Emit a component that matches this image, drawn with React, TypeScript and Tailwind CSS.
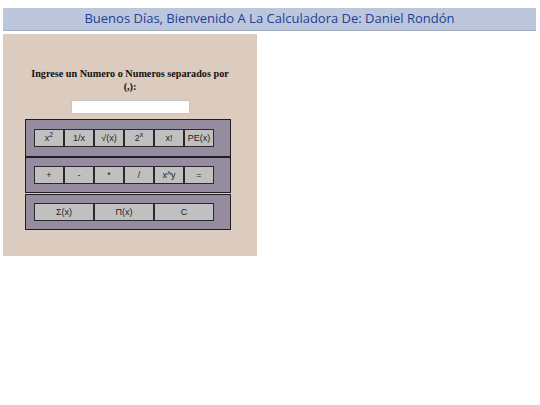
import React, { useState } from 'react';

const btn =
  "h-[18px] bg-[#c0c0c0] border border-[#2a2a2a] text-[9px] text-[#222] flex items-center justify-center leading-none";

const Box = ({ children, h }: { children: React.ReactNode; h: string }) => (
  <div className={`w-[206px] bg-[#958ca0] border border-[#1e1e1e] px-2 flex items-center ${h}`}>
    {children}
  </div>
);

const App = () => {
  const [valor, setValor] = useState('');

  return (
    <div className="min-h-[405px] bg-white pt-2 px-[3px]" style={{ fontFamily: '"Liberation Sans", Arial, sans-serif' }}>
      <h1
        className="h-[23px] bg-[#bcc6dc] border-b border-[#a4adbf] w-[533px] flex items-center justify-center text-[13px] font-medium text-[#1d3f94]"
        style={{ fontFamily: '"Open Sans", sans-serif' }}
      >
        Buenos Días, Bienvenido A La Calculadora De: Daniel Rondón
      </h1>

      <div className="mt-[3px] w-[254px] h-[222px] bg-[#dccbbf] pt-[33px] px-[22px]">
        <p
          className="text-center font-bold text-[10.2px] leading-[13px] text-[#111]"
          style={{ fontFamily: '"Liberation Serif", "Times New Roman", serif' }}
        >
          Ingrese un Numero o Numeros separados por (,):
        </p>
        <div className="flex justify-center mt-[7px]">
          <input
            value={valor}
            onChange={(e) => setValor(e.target.value)}
            className="w-[119px] h-[14px] bg-white border border-[#c9c4c0] outline-none text-[10px]"
          />
        </div>

        <div className="mt-[5px] flex flex-col">
          <Box h="h-[38px]">
            <div className="grid grid-cols-6 w-[180px]">
              <button className={btn}><span>x<sup className="text-[7px]">2</sup></span></button>
              <button className={btn}>1/x</button>
              <button className={btn}>√(x)</button>
              <button className={btn}><span>2<sup className="text-[7px]">x</sup></span></button>
              <button className={btn}>x!</button>
              <button className={btn}>PE(x)</button>
            </div>
          </Box>
          <Box h="h-[36px]">
            <div className="grid grid-cols-6 w-[180px]">
              <button className={btn}>+</button>
              <button className={btn}>-</button>
              <button className={btn}>*</button>
              <button className={btn}>/</button>
              <button className={btn}>x^y</button>
              <button className={btn}>=</button>
            </div>
          </Box>
          <div className="mt-[1px]">
            <Box h="h-[36px]">
              <div className="grid grid-cols-3 w-[180px]">
                <button className={btn}>Σ(x)</button>
                <button className={btn}>Π(x)</button>
                <button className={btn}>C</button>
              </div>
            </Box>
          </div>
        </div>
      </div>
    </div>
  );
};

export default App;
